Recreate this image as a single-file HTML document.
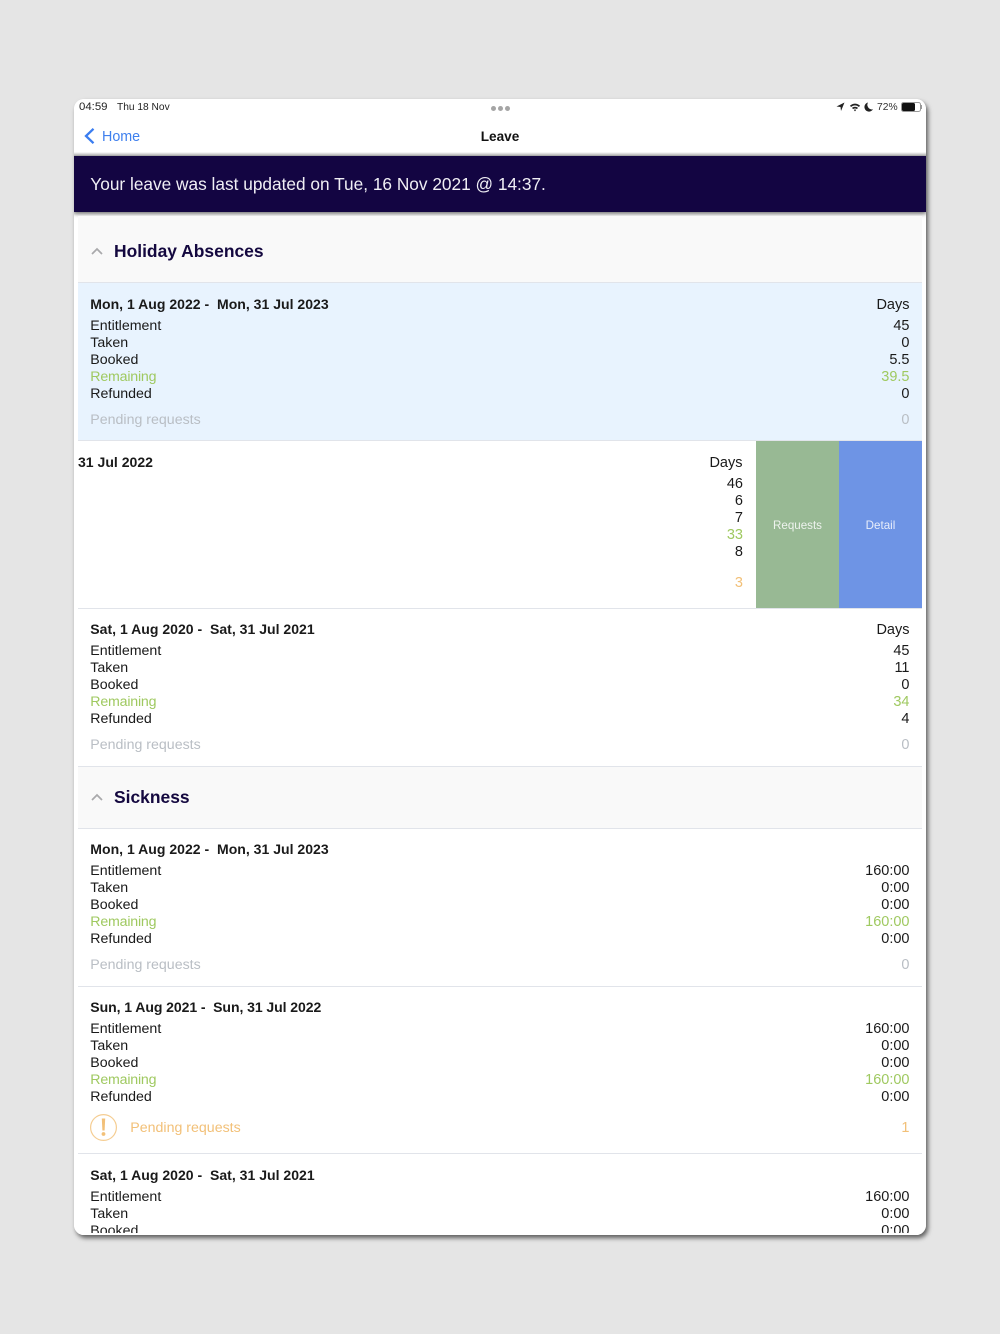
<!DOCTYPE html>
<html><head><meta charset="utf-8">
<style>
html,body{margin:0;padding:0;width:1000px;height:1334px;overflow:hidden;background:#e5e5e5;font-family:"Liberation Sans",sans-serif;}
#s{position:absolute;left:74px;top:99px;width:852px;height:1136px;background:#fff;border-radius:10px;box-shadow:2px 3px 5px rgba(0,0,0,.6);}
#c{position:absolute;left:0;top:0;width:1000px;height:1334px;overflow:hidden;clip-path:inset(99px 74px 99px 74px round 10px);}
.a{position:absolute;}
.l,.r,.b{position:absolute;line-height:20px;height:20px;white-space:nowrap;font-size:14.2px;color:#1a1a1a;margin-top:1px;}
.l{left:90.3px;}
.r{right:90.5px;text-align:right;font-size:14.5px;}
.b{font-weight:bold;font-size:14.05px;color:#1a1a1a;margin-top:0;}
.g{color:#9fc960;}
.l.g{letter-spacing:-.2px;}
.p{color:#b9bec4;}
.o{color:#f2c078;}
.ln{position:absolute;left:78px;width:844px;height:1px;background:#e1e4ea;}
.h{position:absolute;left:114px;font-size:17.45px;font-weight:bold;color:#14083f;line-height:24px;white-space:nowrap;}
</style></head><body>
<div id="s"></div>
<div id="c">
<div class="a" style="left:74px;top:99px;width:852px;height:1136px;background:#fff"></div>

<!-- status -->
<div class="a" style="left:79px;top:101px;font-size:11.4px;line-height:13px;color:#222;white-space:nowrap">04:59</div>
<div class="a" style="left:117px;top:101px;font-size:10.2px;line-height:13px;color:#222;white-space:nowrap">Thu 18 Nov</div>
<div class="a" style="left:491px;top:106px;width:5px;height:5px;border-radius:50%;background:#a5a5a5"></div>
<div class="a" style="left:498px;top:106px;width:5px;height:5px;border-radius:50%;background:#a5a5a5"></div>
<div class="a" style="left:505px;top:106px;width:5px;height:5px;border-radius:50%;background:#a5a5a5"></div>
<svg class="a" style="left:835px;top:101px" width="70" height="12" viewBox="0 0 70 12">
<path d="M9.5 1.5 L1.5 5.5 L5.5 6 L6 10 Z" fill="#222"/>
<path d="M15 4.6 Q20 .6 25 4.6 L24 6 Q20 2.8 16 6 Z M17 6.8 Q20 4.6 23 6.8 L22 8.1 Q20 6.8 18 8.1 Z M18.8 8.9 Q20 8.1 21.2 8.9 L20 10.4 Z" fill="#222"/>
<path d="M33 1.5 A4.6 4.6 0 1 0 38 8.3 A4.6 4.6 0 0 1 33 1.5 Z" fill="#222"/>
</svg>
<div class="a" style="left:877px;top:101px;font-size:10.3px;line-height:13px;color:#333;white-space:nowrap">72%</div>
<div class="a" style="left:901px;top:102px;width:18px;height:8px;border:1px solid #999;border-radius:2.5px"></div>
<div class="a" style="left:902px;top:103px;width:13px;height:8px;background:#111;border-radius:1.5px"></div>
<div class="a" style="left:921px;top:105px;width:1px;height:4px;background:#999"></div>

<!-- nav -->
<svg class="a" style="left:83px;top:127px" width="14" height="18" viewBox="0 0 14 18"><path d="M10.5 1.8 L3 9 L10.5 16.2" fill="none" stroke="#3a7df0" stroke-width="2.3"/></svg>
<div class="a" style="left:102px;top:127px;font-size:14.3px;line-height:20px;color:#3f80ee">Home</div>
<div class="a" style="left:400px;width:200px;text-align:center;top:127px;font-size:13.6px;font-weight:bold;line-height:20px;color:#111">Leave</div>

<!-- banner -->
<div class="a" style="left:74px;top:152px;width:852px;height:4px;background:linear-gradient(#fff,#aaa)"></div>
<div class="a" style="left:74px;top:156px;width:852px;height:56px;background:#130542;box-shadow:0 2px 4px rgba(0,0,0,.45)"></div>
<div class="a" style="left:90.3px;top:172px;font-size:17.28px;line-height:24px;color:#f0eff5;white-space:nowrap">Your leave was last updated on Tue, 16 Nov 2021 @ 14:37.</div>

<!-- holiday header -->
<div class="a" style="left:78px;top:216px;width:844px;height:66px;background:#f9f9f9"></div>
<div class="a" style="left:74px;top:212px;width:852px;height:4px;z-index:2;background:linear-gradient(rgba(0,0,0,.12),rgba(0,0,0,0))"></div>
<svg class="a" style="left:90px;top:246px" width="14" height="10" viewBox="0 0 14 10"><path d="M2 8 L7 3 L12 8" fill="none" stroke="#a9a9ab" stroke-width="1.7"/></svg>
<div class="h" style="top:239px">Holiday Absences</div>
<div class="ln" style="top:282px"></div>

<!-- block 1 -->
<div class="a" style="left:78px;top:283px;width:844px;height:157px;background:#e8f3fe"></div>
<div class="b" style="left:90.3px;top:294px">Mon, 1 Aug 2022 -&nbsp; Mon, 31 Jul 2023</div><div class="r" style="top:294px">Days</div>
<div class="l" style="top:315px">Entitlement</div><div class="r" style="top:315px">45</div>
<div class="l" style="top:332px">Taken</div><div class="r" style="top:332px">0</div>
<div class="l" style="top:349px">Booked</div><div class="r" style="top:349px">5.5</div>
<div class="l g" style="top:366px">Remaining</div><div class="r g" style="top:366px">39.5</div>
<div class="l" style="top:383px">Refunded</div><div class="r" style="top:383px">0</div>
<div class="l p" style="top:409px">Pending requests</div><div class="r p" style="top:409px">0</div>
<div class="ln" style="top:440px"></div>

<!-- block 2 swiped -->
<div class="b" style="left:78px;top:452px">31 Jul 2022</div><div class="r" style="right:257.5px;top:452px">Days</div>
<div class="r" style="right:257px;top:473px">46</div>
<div class="r" style="right:257px;top:490px">6</div>
<div class="r" style="right:257px;top:507px">7</div>
<div class="r g" style="right:257px;top:524px">33</div>
<div class="r" style="right:257px;top:541px">8</div>
<div class="r o" style="right:257px;top:572px">3</div>
<div class="a" style="left:756px;top:441px;width:83px;height:167px;background:#98b994;color:#eef3ee;font-size:11.6px;line-height:169px;text-align:center">Requests</div>
<div class="a" style="left:839px;top:441px;width:83px;height:167px;background:#6e94e5;color:#e8eefb;font-size:11.6px;line-height:169px;text-align:center">Detail</div>
<div class="ln" style="top:608px"></div>

<!-- block 3 -->
<div class="b" style="left:90.3px;top:619px">Sat, 1 Aug 2020 -&nbsp; Sat, 31 Jul 2021</div><div class="r" style="top:619px">Days</div>
<div class="l" style="top:640px">Entitlement</div><div class="r" style="top:640px">45</div>
<div class="l" style="top:657px">Taken</div><div class="r" style="top:657px">11</div>
<div class="l" style="top:674px">Booked</div><div class="r" style="top:674px">0</div>
<div class="l g" style="top:691px">Remaining</div><div class="r g" style="top:691px">34</div>
<div class="l" style="top:708px">Refunded</div><div class="r" style="top:708px">4</div>
<div class="l p" style="top:734px">Pending requests</div><div class="r p" style="top:734px">0</div>
<div class="ln" style="top:766px"></div>

<!-- sickness header -->
<div class="a" style="left:78px;top:767px;width:844px;height:61px;background:#f9f9f9"></div>
<svg class="a" style="left:90px;top:792px" width="14" height="10" viewBox="0 0 14 10"><path d="M2 8 L7 3 L12 8" fill="none" stroke="#a9a9ab" stroke-width="1.7"/></svg>
<div class="h" style="top:785px">Sickness</div>
<div class="ln" style="top:828px"></div>

<!-- block 4 -->
<div class="b" style="left:90.3px;top:839px">Mon, 1 Aug 2022 -&nbsp; Mon, 31 Jul 2023</div>
<div class="l" style="top:860px">Entitlement</div><div class="r" style="top:860px">160:00</div>
<div class="l" style="top:877px">Taken</div><div class="r" style="top:877px">0:00</div>
<div class="l" style="top:894px">Booked</div><div class="r" style="top:894px">0:00</div>
<div class="l g" style="top:911px">Remaining</div><div class="r g" style="top:911px">160:00</div>
<div class="l" style="top:928px">Refunded</div><div class="r" style="top:928px">0:00</div>
<div class="l p" style="top:954px">Pending requests</div><div class="r p" style="top:954px">0</div>
<div class="ln" style="top:986px"></div>

<!-- block 5 -->
<div class="b" style="left:90.3px;top:997px;letter-spacing:-.08px">Sun, 1 Aug 2021 -&nbsp; Sun, 31 Jul 2022</div>
<div class="l" style="top:1018px">Entitlement</div><div class="r" style="top:1018px">160:00</div>
<div class="l" style="top:1035px">Taken</div><div class="r" style="top:1035px">0:00</div>
<div class="l" style="top:1052px">Booked</div><div class="r" style="top:1052px">0:00</div>
<div class="l g" style="top:1069px">Remaining</div><div class="r g" style="top:1069px">160:00</div>
<div class="l" style="top:1086px">Refunded</div><div class="r" style="top:1086px">0:00</div>
<svg class="a" style="left:89px;top:1113px" width="29" height="29" viewBox="0 0 29 29"><circle cx="14.5" cy="14.5" r="12.9" fill="none" stroke="#f5cd92" stroke-width="1.2"/><path d="M12.8 5.5 H16.2 L15.6 17.5 H13.4 Z" fill="#f2c078"/><circle cx="14.5" cy="21" r="1.9" fill="#f2c078"/></svg>
<div class="a o" style="left:130.3px;top:1118px;font-size:14.2px;line-height:20px;white-space:nowrap">Pending requests</div><div class="r o" style="top:1117px">1</div>
<div class="ln" style="top:1153px"></div>

<!-- block 6 -->
<div class="b" style="left:90.3px;top:1165px">Sat, 1 Aug 2020 -&nbsp; Sat, 31 Jul 2021</div>
<div class="l" style="top:1186px">Entitlement</div><div class="r" style="top:1186px">160:00</div>
<div class="l" style="top:1203px">Taken</div><div class="r" style="top:1203px">0:00</div>
<div class="l" style="top:1220px">Booked</div><div class="r" style="top:1220px">0:00</div>
<div class="a" style="left:74px;top:1233px;width:852px;height:3px;background:#fff"></div>
</div>
</body></html>
